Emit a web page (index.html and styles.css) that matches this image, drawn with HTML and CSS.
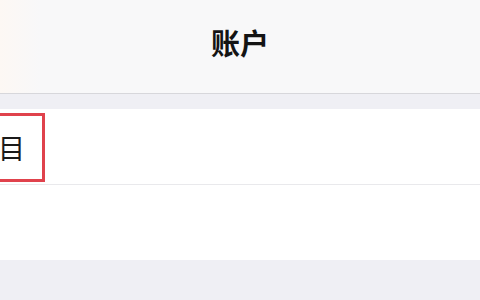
FILE: index.html
```html
<!DOCTYPE html>
<html lang="zh-CN">
  <head>
    <meta charset="UTF-8" />
    <meta name="viewport" content="width=device-width, initial-scale=1.0" />
    <title>账户</title>
    <link rel="stylesheet" href="styles.css">
  </head>
  <body>
    <div class="navBar">
      <div class="titulo">账户</div>
    </div>
    <div class="espaco"></div>
    <div class="lista">
      <div class="linha">
        <div class="destaque">
          <span class="rotulo">项目</span>
        </div>
      </div>
      <div class="linha"></div>
    </div>
  </body>
</html>
```

FILE: styles.css
```css
body {
  margin: 0;
  width: 480px;
  height: 300px;
  overflow: hidden;
  background-color: #efeff4;
  font-family: "Noto Sans CJK SC", "Noto Sans", sans-serif;
}
.navBar {
  display: flex;
  align-items: center;
  justify-content: center;
  height: 93px;
  border-bottom: 1px solid #d7d7db;
  background: linear-gradient(to right, #fdf8f4 0, #f8f8f9 40px);
}
.titulo {
  font-size: 29px;
  font-weight: 600;
  color: #141414;
  margin-top: -10px;
}
.espaco {
  height: 15px;
}
.lista {
  background-color: white;
}
.linha {
  display: flex;
  align-items: center;
  height: 75px;
  border-bottom: 1px solid #e9e9ec;
}
.linha:last-child {
  border-bottom: none;
}
.destaque {
  display: flex;
  align-items: center;
  justify-content: flex-end;
  box-sizing: border-box;
  margin-left: -40px;
  width: 85px;
  height: 69px;
  padding-right: 17px;
  border: 3px solid #e0424c;
  margin-top: 2px;
}
.rotulo {
  font-size: 27px;
  color: #1a1a1a;
  white-space: nowrap;
}
```
